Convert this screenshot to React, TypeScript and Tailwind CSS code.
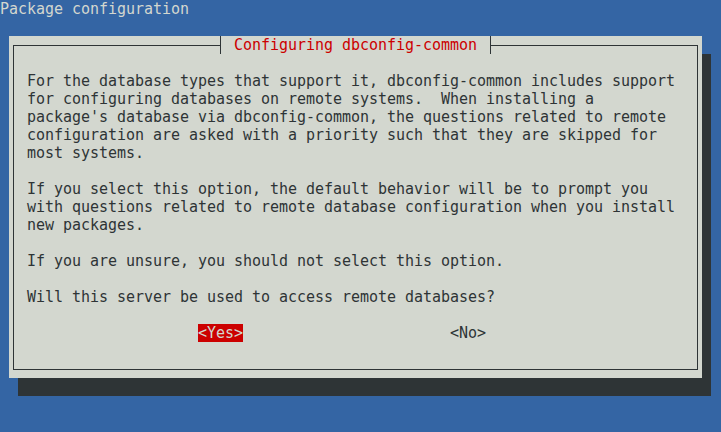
const paragraphs: string[][] = [
  [
    'For the database types that support it, dbconfig-common includes support',
    'for configuring databases on remote systems.  When installing a',
    "package's database via dbconfig-common, the questions related to remote",
    'configuration are asked with a priority such that they are skipped for',
    'most systems.',
  ],
  [
    'If you select this option, the default behavior will be to prompt you',
    'with questions related to remote database configuration when you install',
    'new packages.',
  ],
  ['If you are unsure, you should not select this option.'],
  ['Will this server be used to access remote databases?'],
]

export default function App() {
  return (
    <div className="h-[432px] w-[721px] overflow-hidden bg-[#3465a4] font-['DejaVu_Sans_Mono',monospace] text-[15px] leading-[18px] tracking-[-0.03px] text-[#2e3436]">
      <div className="h-[18px] whitespace-pre text-[#d3d7cf]">Package configuration</div>

      <div className="ml-[9px] mt-[18px] h-[342px] w-[693px] bg-[#d3d7cf] pb-[8px] pl-[4px] pr-[4px] pt-[9px] shadow-[9px_18px_0_#2e3436]">
        <div className="relative h-full border border-[#2e3436] pl-[13px] pt-[26px]">
          <div className="absolute left-[206px] top-[-10px] h-[18px] w-[271px] border-x border-[#2e3436] bg-[#d3d7cf] pl-[13px] whitespace-pre text-[#cc0000]">
            Configuring dbconfig-common
          </div>

          <div className="flex flex-col gap-[18px]">
            {paragraphs.map((lines, i) => (
              <div key={i}>
                {lines.map((line) => (
                  <div key={line} className="h-[18px] whitespace-pre">
                    {line}
                  </div>
                ))}
              </div>
            ))}
            <div className="flex h-[18px]">
              <span className="ml-[171px] bg-[#cc0000] text-[#d3d7cf]">&lt;Yes&gt;</span>
              <span className="ml-[207px]">&lt;No&gt;</span>
            </div>
          </div>
        </div>
      </div>
    </div>
  )
}
